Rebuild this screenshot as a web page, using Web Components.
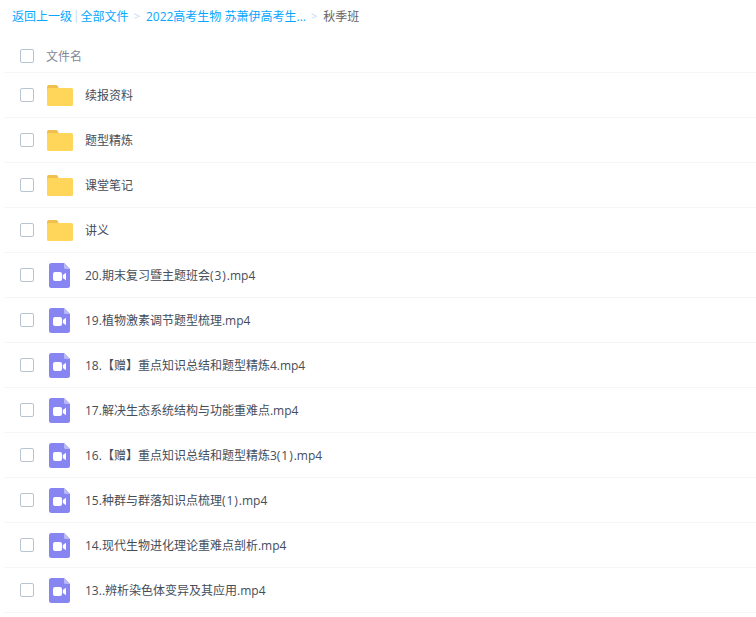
<!DOCTYPE html>
<html lang="zh">
<head>
<meta charset="utf-8">
<style>
  html, body { margin: 0; background: #fff; overflow: hidden; }
  body { font: 12px "Open Sans", "Noto Sans CJK SC", sans-serif; color: #454d5a; }
</style>
</head>
<body>
<file-browser>
  <bread-crumb></bread-crumb>
  <file-head></file-head>
  <file-row type="folder" name="续报资料"></file-row>
  <file-row type="folder" name="题型精炼"></file-row>
  <file-row type="folder" name="课堂笔记"></file-row>
  <file-row type="folder" name="讲义"></file-row>
  <file-row type="video" name="20.期末复习暨主题班会(3).mp4"></file-row>
  <file-row type="video" name="19.植物激素调节题型梳理.mp4"></file-row>
  <file-row type="video" name="18.【赠】重点知识总结和题型精炼4.mp4"></file-row>
  <file-row type="video" name="17.解决生态系统结构与功能重难点.mp4"></file-row>
  <file-row type="video" name="16.【赠】重点知识总结和题型精炼3(1).mp4"></file-row>
  <file-row type="video" name="15.种群与群落知识点梳理(1).mp4"></file-row>
  <file-row type="video" name="14.现代生物进化理论重难点剖析.mp4"></file-row>
  <file-row type="video" name="13..辨析染色体变异及其应用.mp4"></file-row>
</file-browser>
<script>
class FileBrowser extends HTMLElement {
  constructor() {
    super();
    this.attachShadow({mode: 'open'});
    this.shadowRoot.innerHTML = `
    <style>
      :host { display: block; width: 756px; }
    </style>
    <slot></slot>`;
  }
}

class BreadCrumb extends HTMLElement {
  constructor() {
    super();
    this.attachShadow({mode: 'open'});
    this.shadowRoot.innerHTML = `
    <style>
      :host { display: flex; align-items: center; height: 31px; padding-left: 12px; color: #06a7ff; white-space: nowrap; }
      .bar { color: #c4d8f4; margin: 0 1px; }
      .gt { color: #c4d8f4; margin: 0 6px 0 5px; font-size: 11px; }
      .cur { color: #666; }
    </style>
    <span>返回上一级</span><span class="bar">|</span><span>全部文件</span><span class="gt">&gt;</span>
    <span>2022高考生物 苏萧伊高考生...</span><span class="gt">&gt;</span><span class="cur">秋季班</span>`;
  }
}

class FileHead extends HTMLElement {
  constructor() {
    super();
    this.attachShadow({mode: 'open'});
    this.shadowRoot.innerHTML = `
    <style>
      :host { display: flex; align-items: center; box-sizing: border-box; height: 42px; margin-left: 4px; padding: 8px 0 0 16px; border-bottom: 1px solid #f5f6fa; color: #818999; }
      .box { width: 12px; height: 12px; border: 1px solid #b8c4d2; border-radius: 2px; }
      span { margin-left: 12px; }
    </style>
    <div class="box"></div><span>文件名</span>`;
  }
}

const ICONS = {
  folder: `<svg width="26" height="21" viewBox="0 0 26 21">
    <path d="M0 5V2a2 2 0 0 1 2-2h7a2 2 0 0 1 2 1.5L12 4v3H0z" fill="#f0bf4c"/>
    <rect x="0" y="3" width="26" height="18" rx="1.5" fill="#ffd659"/></svg>`,
  video: `<svg width="21" height="25" viewBox="0 0 21 25">
    <path d="M2.5 0H15l6 6v16.5a2.5 2.5 0 0 1-2.5 2.5h-16A2.5 2.5 0 0 1 0 22.5v-20A2.5 2.5 0 0 1 2.5 0z" fill="#8685f1"/>
    <path d="M15 0l6 6h-4.5A1.5 1.5 0 0 1 15 4.5z" fill="#b9b8f8"/>
    <rect x="4" y="9" width="9" height="9" rx="2" fill="#fff"/>
    <path d="M13.8 12l3.2-2.2v7.4L13.8 15z" fill="#fff"/></svg>`
};

class FileRow extends HTMLElement {
  constructor() {
    super();
    this.attachShadow({mode: 'open'});
  }

  connectedCallback() {
    const type = this.getAttribute('type');
    // the brackets run a bit wider in the reference font
    const name = this.getAttribute('name').replace(/\(\d\)/, '<span class="par">$&</span>');
    this.shadowRoot.innerHTML = `
    <style>
      :host { display: flex; align-items: center; box-sizing: border-box; height: 45px; margin-left: 4px; padding-left: 16px; border-bottom: 1px solid #f5f6fa; }
      .box { flex: none; width: 12px; height: 12px; border: 1px solid #b8c4d2; border-radius: 2px; }
      .icon { flex: none; width: 26px; margin: 1px 0 0 13px; display: flex; }
      .icon.video { padding-left: 2px; width: 24px; }
      .name { margin-left: 12px; color: #454d5a; white-space: nowrap; }
      .par { letter-spacing: 1px; }
    </style>
    <div class="box"></div>
    <div class="icon ${type}">${ICONS[type]}</div>
    <span class="name">${name}</span>`;
  }
}

customElements.define('file-browser', FileBrowser);
customElements.define('bread-crumb', BreadCrumb);
customElements.define('file-head', FileHead);
customElements.define('file-row', FileRow);
</script>
</body>
</html>
